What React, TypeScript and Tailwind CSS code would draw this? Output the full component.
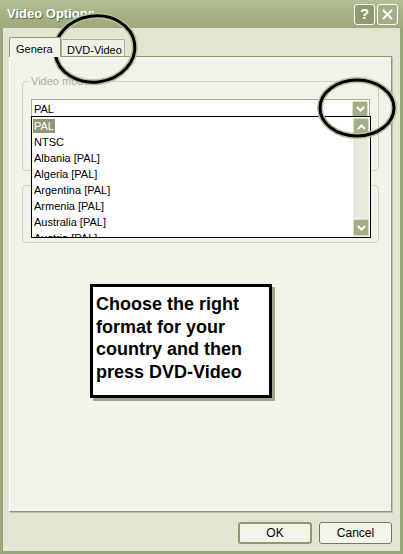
import React from "react";

const items = ["PAL", "NTSC", "Albania [PAL]", "Algeria [PAL]", "Argentina [PAL]", "Armenia [PAL]", "Australia [PAL]", "Austria [PAL]"];

const ArrowBtn = ({ dir, className = "" }: { dir: "up" | "down"; className?: string }) => (
  <div className={`w-[16px] h-[17px] bg-[#a4ae86] border border-[#d8dec6] rounded-[2px] flex items-center justify-center ${className}`}>
    <svg width="9" height="6" viewBox="0 0 9 6">
      {dir === "down" ? (
        <path d="M1 1 L4.5 4.5 L8 1" stroke="#fff" strokeWidth="2" fill="none" />
      ) : (
        <path d="M1 5 L4.5 1.5 L8 5" stroke="#fff" strokeWidth="2" fill="none" />
      )}
    </svg>
  </div>
);

export default function App() {
  return (
    <div className="relative w-[403px] h-[554px] overflow-hidden bg-[#e4e4d2] font-['Liberation_Sans',Arial,sans-serif] text-[11px] text-black">
      <div className="flex flex-col h-full border-x-[3px] border-b-[3px] border-[#98a67c]">
        {/* title bar */}
        <div className="h-[28px] -mx-[3px] bg-gradient-to-b from-[#b4bf95] via-[#a6b283] to-[#9eab7c] flex items-center justify-between pl-[7px] pr-[5px]">
          <span className="text-white font-bold text-[13px] [text-shadow:1px_1px_0_#5f6b47]">Video Options</span>
          <div className="flex gap-[2px]">
            <div className="w-[21px] h-[21px] rounded-[3px] border border-white bg-[#8f9b6f] flex items-center justify-center text-white font-bold text-[15px]">?</div>
            <div className="w-[21px] h-[21px] rounded-[3px] border border-white bg-[#a3ae86] flex items-center justify-center">
              <svg width="13" height="13" viewBox="0 0 13 13">
                <path d="M2 2 L11 11 M11 2 L2 11" stroke="#fff" strokeWidth="2" />
              </svg>
            </div>
          </div>
        </div>

        {/* tabs */}
        <div className="pl-[6px] pr-[8px] pt-[9px] flex-1 flex flex-col">
          <div className="flex items-end h-[19px]">
            <div className="relative z-10 h-[20px] w-[52px] bg-[#f2f2ea] border border-b-0 border-[#8e9a74] rounded-t-[2px] pl-[6px] pt-[3px] -mb-[1px]">Genera</div>
            <div className="h-[17px] w-[64px] bg-[#f0f0e6] border border-b-0 border-[#a9b293] rounded-t-[2px] pl-[5px] pt-[2px]">DVD-Video</div>
          </div>
          <div className="relative h-[456px] bg-[#f2f2ea] border border-t-[#8e9a74] border-l-white border-r-[#8e9a74] border-b-[#8e9a74] shadow-[1px_1px_0_#bcc4a4] px-[12px] pt-[16px]">
            {/* group video mode */}
            <fieldset className="border border-[#d0d0bc] rounded-[4px] h-[98px] px-[8px] pt-[8px]">
              <legend className="px-[2px] ml-[-2px] text-[#a9ae98]">Video mode</legend>
              <div className="h-[21px] bg-white border border-[#a6af8e] flex items-center justify-between pl-[2px] pr-[1px] mt-[1px]">
                <span>PAL</span>
                <ArrowBtn dir="down" />
              </div>
            </fieldset>
            <div className="mt-[14px] h-[58px] border border-[#d0d0bc] rounded-[4px]" />

            {/* dropdown list */}
            <div className="absolute left-[21px] top-[59px] w-[340px] h-[122px] bg-white border border-black overflow-hidden flex">
              <div className="flex-1 pt-[1px]">
                {items.map((t, i) => (
                  <div key={t} className="h-[16px] flex items-center pl-[2px]">
                    <span className={i === 0 ? "bg-[#8f9874] text-white px-[1px] -ml-[1px] leading-[14px]" : ""}>{t}</span>
                  </div>
                ))}
              </div>
              <div className="w-[17px] bg-[#f4f4ee] flex flex-col justify-between py-[1px] pr-[1px]">
                <ArrowBtn dir="up" />
                <div className="flex-1 mx-[1px] my-[1px] bg-[#e8eadc] border-l border-[#d8dcc8]" />
                <ArrowBtn dir="down" />
              </div>
            </div>

            {/* annotation */}
            <div className="absolute left-[80px] top-[227px] w-[182px] h-[114px] bg-white border-[3px] border-black shadow-[3px_3px_0_#9ea58a] pl-[3px] pt-[6px] font-bold text-[18px] leading-[22.5px]">
              Choose the right format for your country and then press DVD-Video
            </div>
          </div>
          <div className="flex justify-end gap-[7px] mt-[10px]">
            <button className="w-[74px] h-[22px] bg-[#f4f4ec] border-2 border-[#8c9a6c] rounded-[3px] text-[12px]">OK</button>
            <button className="w-[73px] h-[22px] bg-[#f4f4ec] border border-[#6f7a56] rounded-[3px] text-[12px]">Cancel</button>
          </div>
        </div>
      </div>

      {/* hand-drawn circles */}
      <svg className="absolute left-0 top-0 pointer-events-none" width="403" height="554">
        <ellipse cx="95" cy="49" rx="40" ry="33" fill="none" stroke="#b9c29c" strokeWidth="6" transform="rotate(-8 95 49)" />
        <ellipse cx="95" cy="49" rx="40" ry="33" fill="none" stroke="#000" strokeWidth="3" transform="rotate(-8 95 49)" />
        <ellipse cx="357" cy="108" rx="37" ry="28" fill="none" stroke="#b9c29c" strokeWidth="6" />
        <ellipse cx="357" cy="108" rx="37" ry="28" fill="none" stroke="#000" strokeWidth="3" />
      </svg>
    </div>
  );
}
